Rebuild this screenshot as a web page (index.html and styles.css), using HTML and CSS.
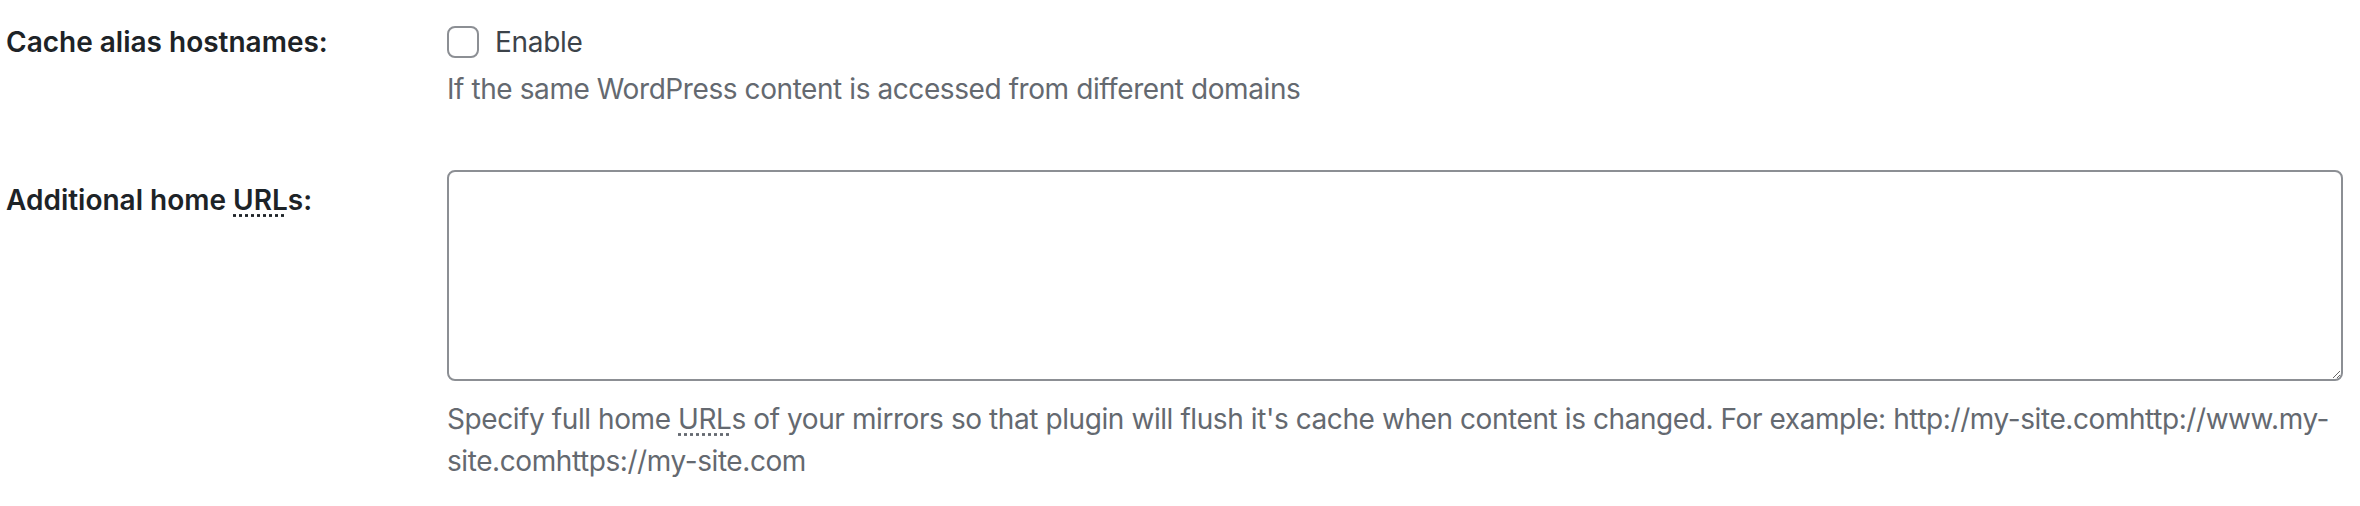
FILE: index.html
```html
<!DOCTYPE html>
<html>
<head>
    <link rel="stylesheet" href="styles.css">
</head>
<body>
    <div class="form-table">
        <div class="form-row">
            <div class="row-label">Cache alias hostnames:</div>
            <div class="row-field">
                <label class="check-label">
                    <input type="checkbox" class="check">
                    Enable
                </label>
                <p class="description">If the same WordPress content is accessed from different domains</p>
            </div>
        </div>

        <div class="form-row row-wide">
            <div class="row-label">Additional home <abbr title="Uniform Resource Locator">URL</abbr>s:</div>
            <div class="row-field">
                <textarea class="large-text" rows="5"></textarea>
                <p class="description description-wide">Specify full home <abbr title="Uniform Resource Locator">URL</abbr>s of your mirrors so that plugin will flush it's cache when content is changed. For example: http://my-site.comhttp://www.my-site.comhttps://my-site.com</p>
            </div>
        </div>
    </div>
</body>
</html>
```

FILE: styles.css
```css
/* Settings table, drawn at 2x */
body {
    margin: 0;
    background: #ffffff;
    color: #3c434a;
    font-family: Inter, "Noto Sans", sans-serif;
    font-size: 28px;
}

.form-table {
    padding-left: 6px;
    padding-right: 17px;
}

.form-row {
    display: grid;
    grid-template-columns: 441px 1fr;
    padding-top: 24px;
    padding-bottom: 30px;
}

.row-wide {
    padding-top: 0;
}

.row-label {
    color: #1d2327;
    font-weight: 600;
    line-height: 1.3;
}

.row-wide .row-label {
    padding-top: 42px;
}

.row-wide .row-field {
    padding-top: 30px;
}

.check-label {
    display: flex;
    align-items: center;
    gap: 16px;
    line-height: 1.3;
    letter-spacing: -0.3px;
}

.check {
    appearance: none;
    margin: 0;
    width: 32px;
    height: 32px;
    border: 2px solid #8c8f94;
    border-radius: 8px;
    background: #ffffff;
}

.description {
    margin: 8px 0 0;
    color: #646970;
    line-height: 1.5;
    letter-spacing: -0.42px;
}

.description-wide {
    margin-top: 17px;
}

abbr {
    text-decoration: underline dotted;
    text-underline-offset: 4px;
}

.large-text {
    display: block;
    box-sizing: border-box;
    width: 100%;
    height: 211px;
    margin: 0;
    border: 2px solid #8c8f94;
    border-radius: 8px;
    background: #ffffff;
    font-family: inherit;
    font-size: 28px;
}
```
